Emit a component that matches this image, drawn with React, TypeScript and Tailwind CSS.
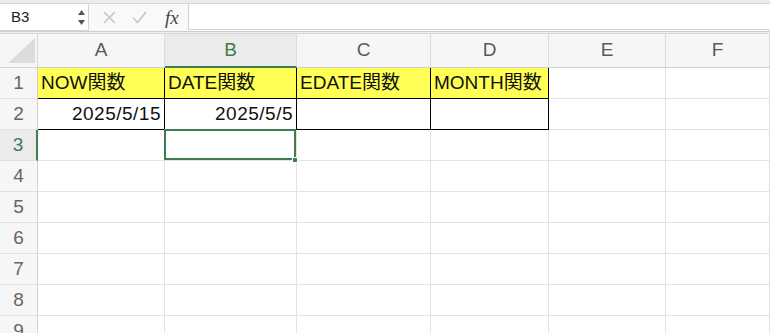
import React from 'react';

// Excel 風シート（B3 選択中）
const COLS = ['A', 'B', 'C', 'D', 'E', 'F'];
const ROWS = [1, 2, 3, 4, 5, 6, 7, 8, 9];

const DATA: Record<string, { v: string; align: 'left' | 'right' }> = {
  A1: { v: 'NOW関数', align: 'left' },
  B1: { v: 'DATE関数', align: 'left' },
  C1: { v: 'EDATE関数', align: 'left' },
  D1: { v: 'MONTH関数', align: 'left' },
  A2: { v: '2025/5/15', align: 'right' },
  B2: { v: '2025/5/5', align: 'right' },
};

const FONT = "font-['Liberation_Sans','Noto_Sans_CJK_JP',sans-serif]";

function Toolbar() {
  return (
    <div className="h-[34px] bg-[#f9f9f9]">
      <div className="h-[4px] bg-[#ececec] border-b border-[#d6d6d6]" />
      <div className="h-[27px] flex items-stretch">
        {/* 名前ボックス */}
        <div className="w-[89px] bg-white border-r border-b border-[#d4d4d4] flex items-center justify-between pl-[11px] pr-[2px]">
          <span className="text-[15px] text-[#222]">B3</span>
          <svg width="9" height="20" viewBox="0 0 9 20">
            <path d="M4.5 3 L8 8 L1 8 Z" fill="#555" />
            <path d="M1 13 L8 13 L4.5 18 Z" fill="#555" />
          </svg>
        </div>
        <div className="w-[99px] flex items-center">
          <svg className="ml-[14px]" width="13" height="13" viewBox="0 0 13 13">
            <path d="M1 1 L12 12 M12 1 L1 12" stroke="#c6c6c6" strokeWidth="1.6" />
          </svg>
          <svg className="ml-[16px]" width="15" height="13" viewBox="0 0 15 13">
            <path d="M1 6.5 L5.5 11.5 L14 1" stroke="#c6c6c6" strokeWidth="1.6" fill="none" />
          </svg>
          <span className="ml-[18px] font-['Liberation_Serif',serif] italic text-[19px] text-[#444] leading-none">
            fx
          </span>
        </div>
        {/* 数式バー */}
        <div className="flex-1 bg-white border-l border-b border-[#d4d4d4] mb-[1px]" />
      </div>
      <div className="h-[3px] border-t border-[#cdcdcd] bg-[#efefef] border-b border-b-[#d6d6d6]" />
    </div>
  );
}

function Cell({ col, row }: { col: string; row: number }) {
  const key = `${col}${row}`;
  const d = DATA[key];
  const boxed = row <= 2 && ['A', 'B', 'C', 'D'].includes(col);
  const yellow = row === 1 && boxed;
  const selected = key === 'B3';
  return (
    <div
      className={`relative h-[31px] border-r border-b flex items-center px-[3px] text-[19px] text-[#111] ${
        boxed ? 'border-black' : 'border-[#e2e2e2]'
      } ${yellow ? 'bg-[#ffff55]' : 'bg-white'} ${d?.align === 'right' ? 'justify-end tracking-[0.5px]' : ''} ${
        selected ? 'z-10' : ''
      }`}
    >
      {d && <span className="whitespace-nowrap">{d.v}</span>}
      {selected && (
        <>
          <div className="absolute -left-px -top-px right-0 bottom-0 border-2 border-[#3f7c50]" />
          <div className="absolute -right-[2px] -bottom-[3px] w-[6px] h-[6px] bg-[#3f7c50] border border-white" />
        </>
      )}
    </div>
  );
}

export default function App() {
  return (
    <div className={`w-[770px] h-[333px] overflow-hidden bg-white ${FONT}`}>
      <Toolbar />
      <div className="grid grid-cols-[38px_127px_132px_134px_118px_117px_1fr]">
        {/* 左上の角 */}
        <div className="h-[34px] bg-[#f6f6f6] border-r border-b border-[#d6d6d6] flex items-end justify-end pr-[2px] pb-[4px]">
          <svg width="27" height="25" viewBox="0 0 27 25">
            <path d="M27 0 L27 25 L0 25 Z" fill="#dcdcdc" />
          </svg>
        </div>
        {COLS.map((c) => (
          <div
            key={c}
            className={`h-[34px] flex items-center justify-center text-[19px] border-r border-[#dcdcdc] ${
              c === 'B'
                ? 'bg-[#ebebeb] text-[#3f7c50] border-b-2 border-b-[#3f7c50]'
                : 'bg-[#f6f6f6] text-[#5a5a5a] border-b border-b-[#d0d0d0]'
            }`}
          >
            {c}
          </div>
        ))}
        {ROWS.map((r) => (
          <React.Fragment key={r}>
            <div
              className={`h-[31px] flex items-center justify-center text-[19px] border-b border-[#e0e0e0] ${
                r === 3
                  ? 'bg-[#ebebeb] text-[#3f7c50] border-r-2 border-r-[#3f7c50]'
                  : 'bg-[#f6f6f6] text-[#666] border-r border-r-[#d0d0d0]'
              }`}
            >
              {r}
            </div>
            {COLS.map((c) => (
              <Cell key={c} col={c} row={r} />
            ))}
          </React.Fragment>
        ))}
      </div>
    </div>
  );
}
